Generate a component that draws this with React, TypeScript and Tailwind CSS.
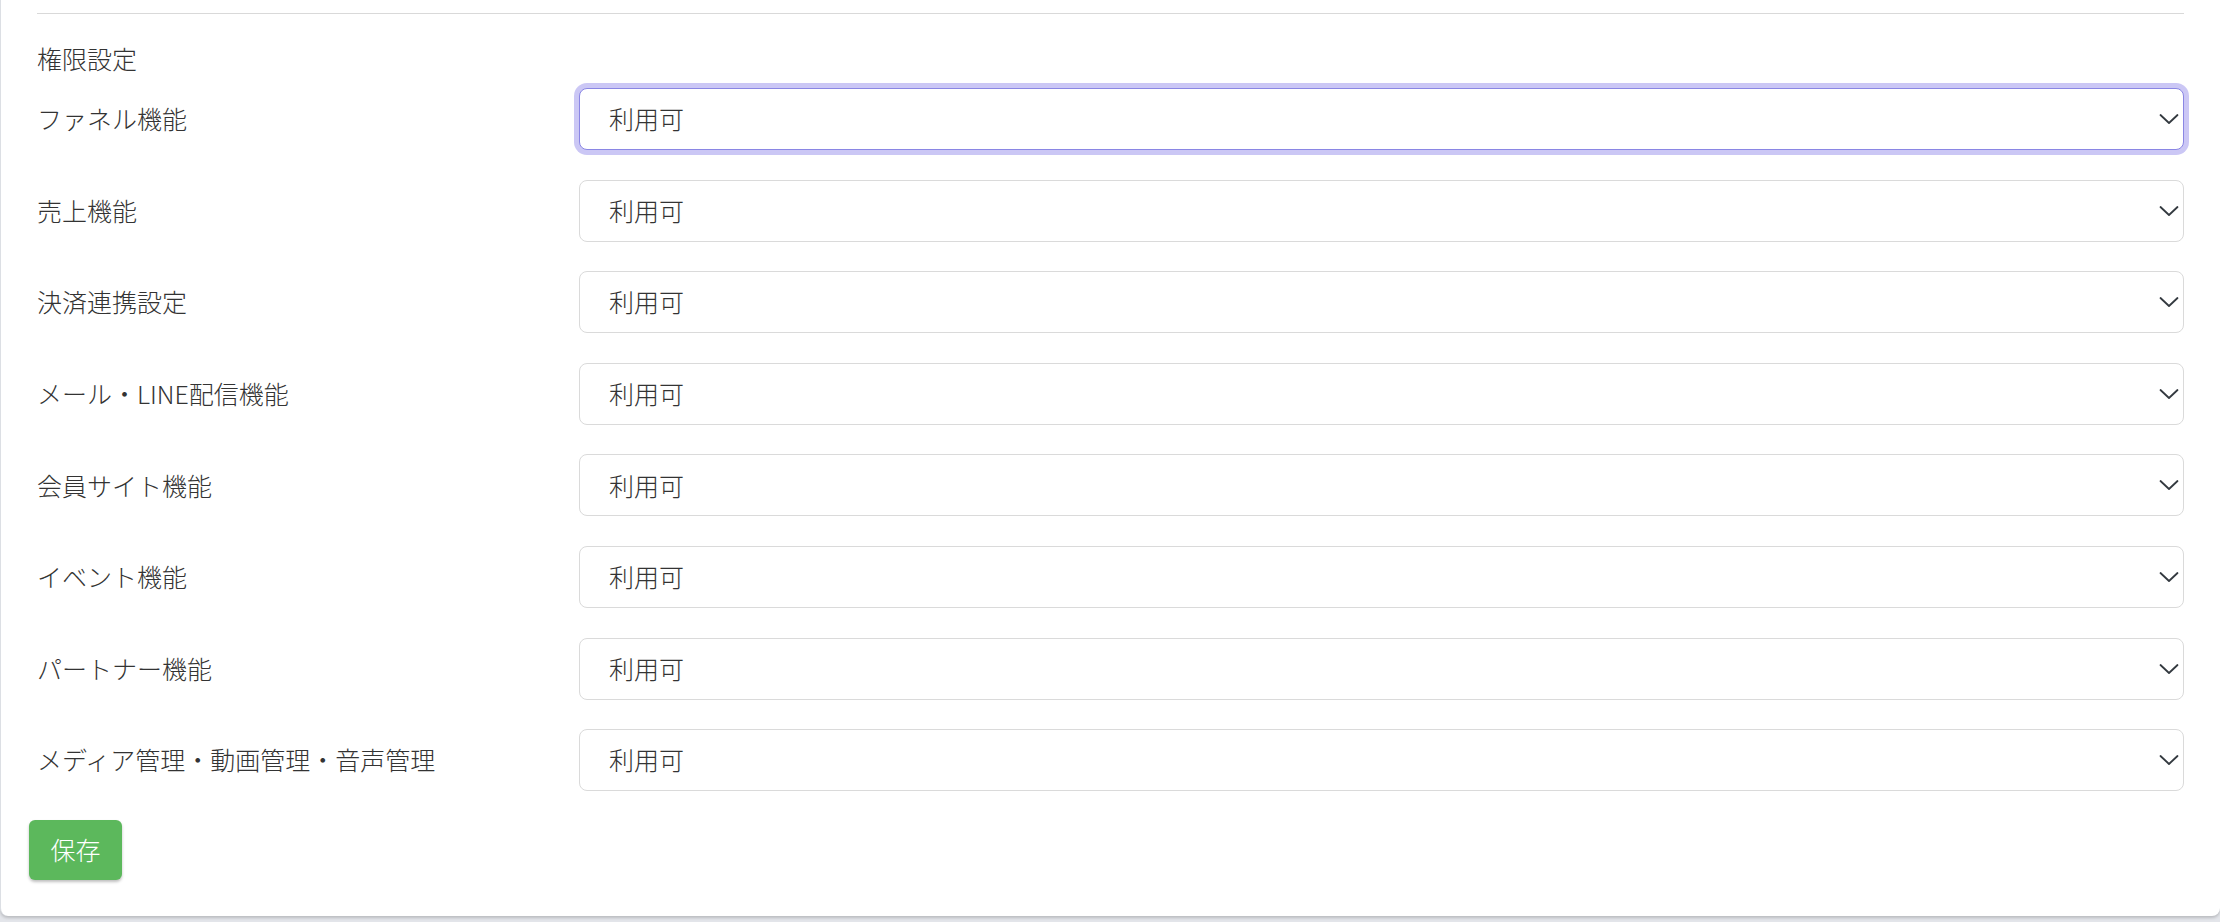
import React, { useState } from 'react';

const permissions = [
  'ファネル機能',
  '売上機能',
  '決済連携設定',
  'メール・LINE配信機能',
  '会員サイト機能',
  'イベント機能',
  'パートナー機能',
  'メディア管理・動画管理・音声管理',
];

const ChevronDown = () => (
  <svg width="20" height="11" viewBox="0 0 20 11" fill="none" className="pointer-events-none absolute right-[5px] top-1/2 -translate-y-1/2">
    <path d="M1.5 1.5l8.5 8 8.5-8" stroke="#343a40" strokeWidth="1.8" strokeLinecap="round" strokeLinejoin="round" />
  </svg>
);

const PermissionSelect: React.FC<{ focused?: boolean }> = ({ focused }) => {
  const [value, setValue] = useState('allow');
  return (
    <div className="relative flex-1">
      <select
        value={value}
        onChange={(e) => setValue(e.target.value)}
        className={`h-[62px] w-full appearance-none rounded-[8px] border bg-white pl-[29px] pr-10 text-[25px] font-light text-[#333] outline-none ${
          focused ? 'border-[#8a86e4] shadow-[0_0_0_5px_#cbc7f5]' : 'border-[#dadada]'
        }`}
      >
        <option value="allow">利用可</option>
        <option value="deny">利用不可</option>
      </select>
      <ChevronDown />
    </div>
  );
};

export default function App() {
  return (
    <div className="h-[922px] bg-[#e3e5ea] font-['Noto_Sans_CJK_JP','Noto_Sans',sans-serif]">
      <div className="rounded-b-[8px] border-l border-[#dcdfe4] bg-white pb-[36px] pl-[36px] pr-[36px] pt-[13px] shadow-[0_2px_3px_rgba(0,0,0,0.18)]">
        <div className="h-px bg-[#d9d9d9]" />
        <div className="mt-[27px] text-[25px] font-light leading-[34px] text-[#333]">権限設定</div>
        <div className="mt-[13px] flex flex-col gap-[29.6px]">
          {permissions.map((label, i) => (
            <div key={label} className="flex h-[62px] items-center">
              <div className="w-[542px] text-[25px] font-light text-[#333]">{label}</div>
              <PermissionSelect focused={i === 0} />
            </div>
          ))}
        </div>
        <button
          type="button"
          className="-ml-[8px] mt-[29px] h-[60px] w-[93px] rounded-[6px] bg-[#5cb85c] text-[25px] font-light text-white shadow-[0_2px_3px_rgba(0,0,0,0.25)]"
        >
          保存
        </button>
      </div>
    </div>
  );
}
